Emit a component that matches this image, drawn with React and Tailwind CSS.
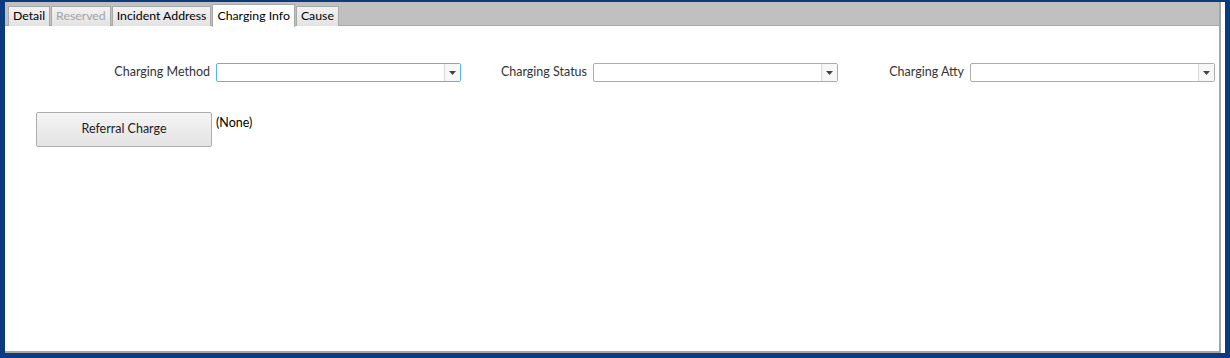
import React from "react";

const font = { fontFamily: "Lato, 'Noto Sans', sans-serif" };

function Arrow() {
  return (
    <svg width="7" height="4" viewBox="0 0 7 4">
      <path d="M0 0 L7 0 L3.5 4 Z" fill="#444" />
    </svg>
  );
}

function Select({ focused }) {
  return (
    <div
      className={
        "flex h-[19px] flex-1 rounded-[2px] border bg-white " +
        (focused ? "border-[#56b4ef]" : "border-[#acacac]")
      }
    >
      <div className="flex-1" />
      <div className="flex w-[16px] items-center justify-center border-l border-[#d9d9d9] bg-[#f7f7f7]">
        <Arrow />
      </div>
    </div>
  );
}

function Field({ label, focused }) {
  return (
    <div className="flex items-center gap-[6px]">
      <div className="w-[126px] text-right text-[12.5px] text-[#333]">{label}</div>
      <Select focused={focused} />
    </div>
  );
}

function Tab({ children, selected, disabled }) {
  if (selected) {
    return (
      <div className="relative z-10 -mb-px mt-[2px] flex h-[23px] items-start border border-b-0 border-[#a9a9a9] bg-white px-[4px] pt-[2px] text-[12.3px] text-black">
        {children}
      </div>
    );
  }
  return (
    <div
      className={
        "mt-[4px] flex h-[20px] items-center border border-b-0 border-[#a9a9a9] bg-gradient-to-b from-[#f2f2f2] to-[#e3e3e3] px-[4px] text-[12.3px] " +
        (disabled ? "text-[#a3a3a3]" : "text-black")
      }
    >
      {children}
    </div>
  );
}

export default function App() {
  return (
    <div style={font} className="h-[358px] w-[1230px] bg-[#0c3a7f] pl-[5px] pr-[5px] pt-[2px] pb-[5px]">
      <div className="flex h-full flex-col bg-white">
        <div className="flex h-full w-[1216px] flex-col border-b-[2px] border-r-[2px] border-[#a6a6a6]">
          <div className="flex h-[24px] items-start gap-[1px] border-b border-[#a9a9a9] bg-[#c0c0c0] pl-[3px]">
            <Tab>Detail</Tab>
            <Tab disabled>Reserved</Tab>
            <Tab>Incident Address</Tab>
            <Tab selected>Charging Info</Tab>
            <Tab>Cause</Tab>
          </div>
          <div className="flex-1 bg-white">
            <div className="mt-[37px] grid grid-cols-[377px_377px_377px] pl-[79px]">
              <Field label="Charging Method" focused />
              <Field label="Charging Status" />
              <Field label="Charging Atty" />
            </div>
            <div className="ml-[31px] mt-[30px] flex items-start gap-[4px]">
              <button className="h-[35px] w-[176px] rounded-[2px] border border-[#adadad] bg-gradient-to-b from-[#f4f4f4] to-[#e4e4e4] text-[12.5px] text-[#222]">
                Referral Charge
              </button>
              <div className="mt-[2px] text-[12.5px] text-black">(None)</div>
            </div>
          </div>
        </div>
      </div>
    </div>
  );
}
